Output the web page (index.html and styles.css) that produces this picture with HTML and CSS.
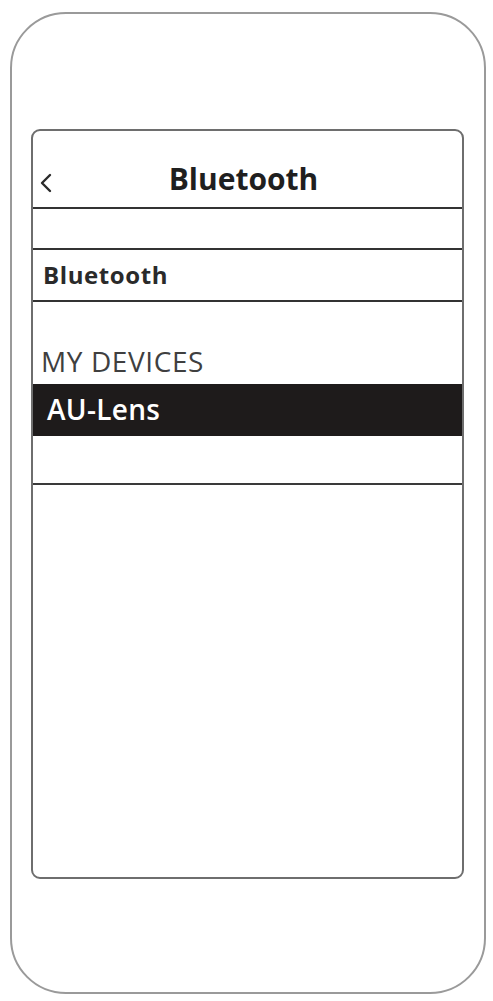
FILE: index.html
```html
<!DOCTYPE html>
<html>
<head>
<meta charset="utf-8">
<link rel="stylesheet" href="styles.css">
</head>
<body>
<div class="phone">
  <div class="screen">
    <div class="header">
      <svg class="back" width="14" height="20" viewBox="0 0 14 20"><polyline points="11,2 3,10 11,18" fill="none" stroke="#2a2a2a" stroke-width="2.4" stroke-linecap="round" stroke-linejoin="round"/></svg>
      <div class="title">Bluetooth</div>
    </div>
    <div class="row blank"></div>
    <div class="row toggle">Bluetooth</div>
    <div class="section">MY DEVICES</div>
    <div class="device">AU-Lens</div>
    <div class="row blank2"></div>
  </div>
</div>
</body>
</html>
```
FILE: styles.css
```css
html, body {
  margin: 0;
  padding: 0;
  background: #ffffff;
}
body {
  font-family: "Open Sans", "Liberation Sans", sans-serif;
  color: #222;
}
.phone {
  box-sizing: border-box;
  margin: 12px 0 0 10px;
  width: 476px;
  height: 982px;
  border: 2px solid #9a9a9a;
  border-radius: 56px;
  padding: 115px 0 0 19px;
}
.screen {
  box-sizing: border-box;
  width: 433px;
  height: 750px;
  border: 2px solid #6e6e6e;
  border-radius: 9px;
  display: flex;
  flex-direction: column;
}
.header {
  box-sizing: border-box;
  height: 78px;
  border-bottom: 2px solid #333;
  display: flex;
  align-items: flex-start;
  position: relative;
  padding-top: 42px;
}
.back {
  margin-left: 6px;
}
.title {
  position: absolute;
  left: 0;
  right: 8px;
  top: 28px;
  text-align: center;
  font-size: 30px;
  font-weight: 700;
  line-height: 40px;
  color: #1f1f1f;
}
.row {
  box-sizing: border-box;
  border-bottom: 2px solid #333;
}
.blank {
  height: 41px;
}
.toggle {
  height: 52px;
  font-size: 24px;
  font-weight: 700;
  letter-spacing: 0.6px;
  color: #2a2a2a;
  padding: 8px 0 0 10px;
  line-height: 34px;
}
.section {
  box-sizing: border-box;
  height: 82px;
  font-size: 28px;
  color: #3f3f3f;
  padding: 41px 0 0 8px;
  line-height: 36px;
  letter-spacing: 0.6px;
}
.device {
  box-sizing: border-box;
  height: 52px;
  background: #1e1b1b;
  color: #fff;
  font-size: 28px;
  font-weight: 600;
  padding: 6px 0 0 14px;
  line-height: 38px;
  letter-spacing: 0.3px;
}
.blank2 {
  height: 49px;
  border-bottom-color: #3a3a3a;
}
```
